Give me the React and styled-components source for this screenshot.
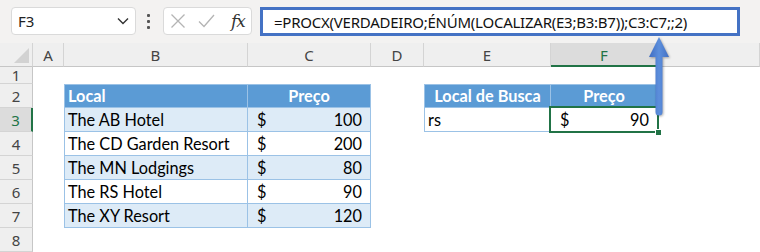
import React from 'react';
import styled, { createGlobalStyle, css } from 'styled-components';

const Global = createGlobalStyle`
  html, body { margin: 0; padding: 0; background: #fff; overflow: hidden; }
  #root { width: 760px; height: 252px; }
  * { box-sizing: border-box; }
`;

const Page = styled.div`
  width: 760px;
  height: 252px;
  position: relative;
  overflow: hidden;
  font-family: "Noto Sans", "Open Sans", sans-serif;
  background: #fff;
`;

const Toolbar = styled.div`
  height: 43px;
  background: #f3f2f1;
  display: flex;
  align-items: flex-start;
  padding: 7px 0 0 11px;
`;

const NameBox = styled.div`
  width: 125px;
  height: 28px;
  background: #fff;
  border: 1px solid #dadada;
  border-radius: 4px;
  display: flex;
  align-items: center;
  justify-content: space-between;
  padding: 0 5px 0 6px;
  font-size: 15px;
  color: #222;
`;

const Dots = styled.div`
  width: 3px;
  height: 28px;
  margin-left: 11px;
  display: flex;
  flex-direction: column;
  justify-content: center;
  gap: 3px;
  span {
    display: block;
    width: 3px;
    height: 3px;
    background: #555;
    border-radius: 1px;
  }
`;

const FuncBox = styled.div`
  width: 89px;
  height: 28px;
  margin-left: 13px;
  background: #fff;
  border: 1px solid #dadada;
  border-radius: 4px;
  display: flex;
  align-items: center;
  padding: 0 0 0 6px;
  gap: 12px;
`;

const Fx = styled.span`
  font-family: "DejaVu Serif", "Liberation Serif", serif;
  font-style: italic;
  font-size: 17px;
  color: #333;
  margin-left: 4px;
  letter-spacing: -1px;
`;

const FormulaBox = styled.div`
  width: 480px;
  height: 29px;
  margin-left: 8px;
  background: #fff;
  border: 3px solid #4472c4;
  display: flex;
  align-items: center;
  padding-left: 11px;
  font-size: 15px;
  letter-spacing: -0.24px;
  color: #111;
  white-space: nowrap;
`;

const Grid = styled.div`
  display: grid;
  grid-template-columns: 33px 31px 184px 123px 53px 127px 107px 1fr;
  grid-template-rows: 24px 17px repeat(7, 24px);
`;

const Corner = styled.div`
  background: #efefef;
  border-right: 1px solid #d4d4d4;
  border-bottom: 1px solid #c6c6c6;
  position: relative;
  &::after {
    content: "";
    position: absolute;
    right: 3px;
    bottom: 3px;
    width: 0;
    height: 0;
    border-left: 15px solid transparent;
    border-bottom: 15px solid #d2d2d2;
  }
`;

const ColHead = styled.div`
  background: ${p => (p.$sel ? '#dcdcdc' : '#efefef')};
  border-right: 1px solid #d4d4d4;
  border-bottom: ${p => (p.$sel ? '2px solid #217346' : '1px solid #c6c6c6')};
  color: ${p => (p.$sel ? '#217346' : '#444')};
  font-size: 15px;
  display: flex;
  align-items: center;
  justify-content: center;
  padding-top: ${p => (p.$sel ? '1px' : '0')};
`;

const RowHead = styled.div`
  background: ${p => (p.$sel ? '#dcdcdc' : '#efefef')};
  border-bottom: 1px solid #d4d4d4;
  border-right: ${p => (p.$sel ? '2px solid #217346' : '1px solid #c6c6c6')};
  color: ${p => (p.$sel ? '#217346' : '#444')};
  font-size: 15px;
  display: flex;
  align-items: center;
  justify-content: center;
`;

const Blank = styled.div`
  background: #fff;
`;

const TCell = styled.div`
  position: relative;
  font-family: Lato, "Liberation Sans", sans-serif;
  font-size: 16.3px;
  line-height: 22px;
  color: #000;
  white-space: nowrap;
  display: flex;
  align-items: center;
  background: ${p => (p.$head ? '#5b9bd5' : p.$band ? '#ddebf7' : '#fff')};
  border-right: 1px solid #9bc2e6;
  border-bottom: 1px solid #9bc2e6;
  ${p => p.$first && css`border-left: 1px solid #9bc2e6;`}
  ${p => p.$head && css`
    border-top: 1px solid #9bc2e6;
    color: #fff;
    font-weight: 700;
  `}
  justify-content: ${p => (p.$center ? 'center' : 'flex-start')};
  padding: 0 3px;
`;

const Money = styled(TCell)`
  justify-content: space-between;
  padding: 0 8px 0 9px;
`;

const Selection = styled.div`
  position: absolute;
  left: -2px;
  top: -2px;
  right: -2px;
  bottom: -2px;
  border: 2px solid #217346;
  pointer-events: none;
`;

const Handle = styled.div`
  position: absolute;
  right: -5px;
  bottom: -5px;
  width: 7px;
  height: 7px;
  background: #217346;
  border: 1px solid #fff;
`;

const Arrow = styled.svg`
  position: absolute;
  left: 647px;
  top: 35px;
  overflow: visible;
`;

const XIcon = () => (
  <svg width="16" height="16" viewBox="0 0 16 16">
    <path d="M1.5 1.5 L14.5 14.5 M14.5 1.5 L1.5 14.5" stroke="#b4b4b4" strokeWidth="1.3" fill="none" />
  </svg>
);

const CheckIcon = () => (
  <svg width="17" height="14" viewBox="0 0 17 14">
    <path d="M1 7.5 L6 12.5 L16 1" stroke="#b4b4b4" strokeWidth="1.3" fill="none" />
  </svg>
);

const Chevron = () => (
  <svg width="14" height="10" viewBox="0 0 14 10">
    <path d="M2 2.5 L7 7.5 L12 2.5" stroke="#333" strokeWidth="1.4" fill="none" />
  </svg>
);

const cols = ['A', 'B', 'C', 'D', 'E', 'F', ''];

const main = [
  ['The AB Hotel', '100'],
  ['The CD Garden Resort', '200'],
  ['The MN Lodgings', '80'],
  ['The RS Hotel', '90'],
  ['The XY Resort', '120'],
];

export default function App() {
  const cells = [];
  cells.push(<Corner key="corner" />);
  cols.forEach((c, i) => cells.push(<ColHead key={'h' + i} $sel={c === 'F'}>{c}</ColHead>));

  for (let r = 1; r <= 8; r++) {
    cells.push(<RowHead key={'r' + r} $sel={r === 3}>{r}</RowHead>);
    cells.push(<Blank key={`a${r}`} />);
    if (r === 2) {
      cells.push(<TCell key="b2" $head $first>Local</TCell>);
      cells.push(<TCell key="c2" $head $center>Preço</TCell>);
    } else if (r >= 3 && r <= 7) {
      const [name, price] = main[r - 3];
      const band = r % 2 === 1;
      cells.push(<TCell key={`b${r}`} $first $band={band}>{name}</TCell>);
      cells.push(
        <Money key={`c${r}`} $band={band}>
          <span>$</span>
          <span>{price}</span>
        </Money>
      );
    } else {
      cells.push(<Blank key={`b${r}`} />);
      cells.push(<Blank key={`c${r}`} />);
    }
    cells.push(<Blank key={`d${r}`} />);
    if (r === 2) {
      cells.push(<TCell key="e2" $head $first $center>Local de Busca</TCell>);
      cells.push(<TCell key="f2" $head $center>Preço</TCell>);
    } else if (r === 3) {
      cells.push(<TCell key="e3" $first>rs</TCell>);
      cells.push(
        <Money key="f3">
          <span>$</span>
          <span>90</span>
          <Selection>
            <Handle />
          </Selection>
        </Money>
      );
    } else {
      cells.push(<Blank key={`e${r}`} />);
      cells.push(<Blank key={`f${r}`} />);
    }
    cells.push(<Blank key={`g${r}`} />);
  }

  return (
    <Page>
      <Global />
      <Toolbar>
        <NameBox>
          <span>F3</span>
          <Chevron />
        </NameBox>
        <Dots>
          <span />
          <span />
          <span />
        </Dots>
        <FuncBox>
          <XIcon />
          <CheckIcon />
          <Fx>fx</Fx>
        </FuncBox>
        <FormulaBox>=PROCX(VERDADEIRO;ÉNÚM(LOCALIZAR(E3;B3:B7));C3:C7;;2)</FormulaBox>
      </Toolbar>
      <Grid>{cells}</Grid>
      <Arrow width="24" height="84" viewBox="0 0 24 84">
        <defs>
          <linearGradient id="ag" x1="0" y1="0" x2="1" y2="0">
            <stop offset="0" stopColor="#3f6cc2" />
            <stop offset="0.5" stopColor="#5d8fdc" />
            <stop offset="1" stopColor="#416fc4" />
          </linearGradient>
        </defs>
        <path
          d="M12 2 L22 22 L15.5 22 L15.5 77 Q15.5 80.5 12 80.5 Q8.5 80.5 8.5 77 L8.5 22 L2 22 Z"
          fill="url(#ag)"
          style={{ filter: 'drop-shadow(1px 1px 1px rgba(0,0,0,0.3))' }}
        />
      </Arrow>
    </Page>
  );
}
